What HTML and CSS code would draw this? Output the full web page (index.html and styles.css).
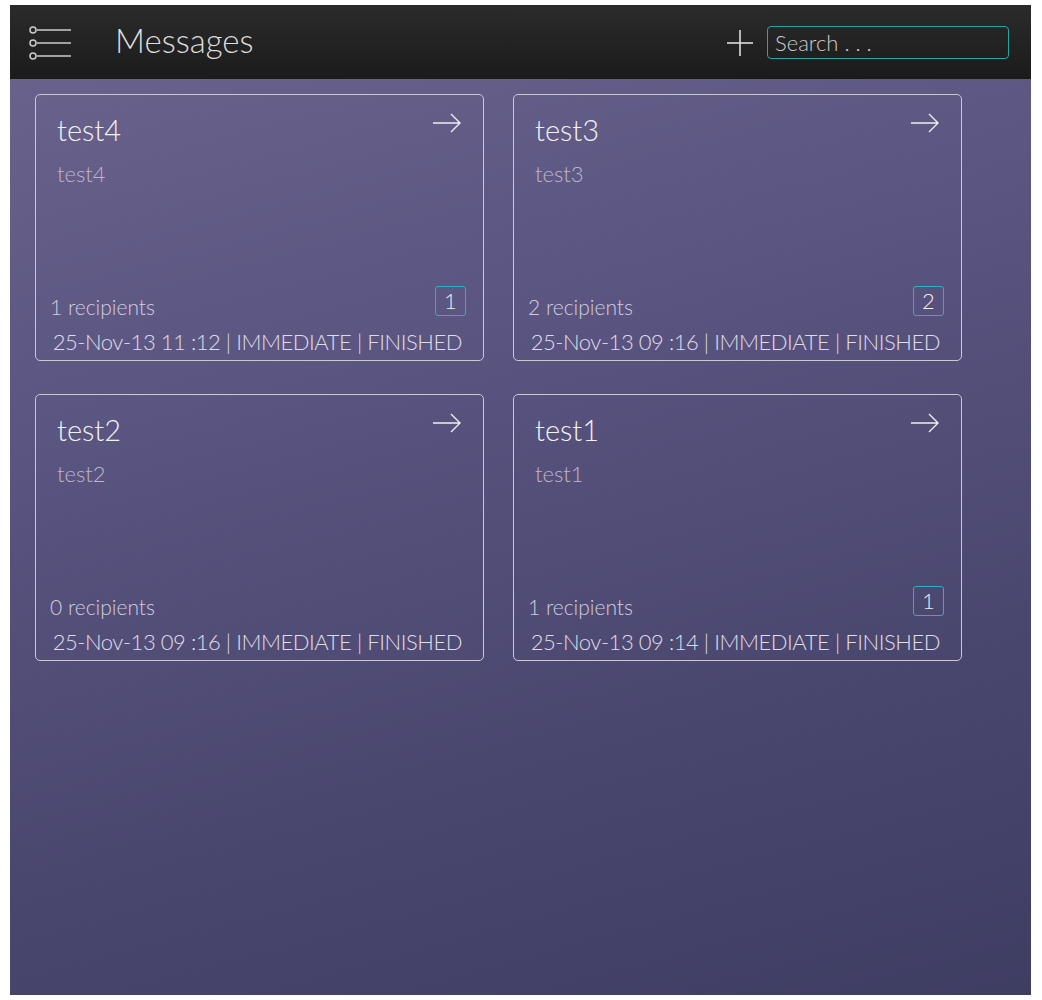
FILE: index.html
```html
<!DOCTYPE html>
<html lang="en">
<head>
    <meta charset="UTF-8">
    <title>Messages</title>
    <link rel="stylesheet" href="styles.css">
</head>
<body>
<div class="app">
    <div class="topbar">
        <svg class="menu_icon" width="44" height="36" viewBox="0 0 44 36">
            <circle cx="5" cy="5" r="3" fill="none" stroke="#ccc" stroke-width="1.5"/>
            <circle cx="5" cy="18" r="3" fill="none" stroke="#ccc" stroke-width="1.5"/>
            <circle cx="5" cy="31" r="3" fill="none" stroke="#ccc" stroke-width="1.5"/>
            <line x1="9" y1="5" x2="43" y2="5" stroke="#ccc" stroke-width="1.5"/>
            <line x1="9" y1="18" x2="43" y2="18" stroke="#ccc" stroke-width="1.5"/>
            <line x1="9" y1="31" x2="43" y2="31" stroke="#ccc" stroke-width="1.5"/>
        </svg>
        <div class="title">Messages</div>
        <svg class="plus" width="26" height="26" viewBox="0 0 26 26">
            <line x1="13" y1="0" x2="13" y2="26" stroke="#ddd" stroke-width="1.6"/>
            <line x1="0" y1="13" x2="26" y2="13" stroke="#ddd" stroke-width="1.6"/>
        </svg>
        <input class="search" type="text" placeholder="Search . . .">
    </div>

    <div class="list">
        <div class="card">
            <div class="card_head">
                <div class="card_title">test4</div>
                <svg class="go" width="30" height="20" viewBox="0 0 30 20">
                    <path d="M1 10 H28 M19 1 L28 10 L19 19" fill="none" stroke="#eee" stroke-width="1.4"/>
                </svg>
            </div>
            <div class="card_sub">test4</div>
            <div class="card_row">
                <span class="recip">1 recipients</span>
                <span class="badge">1</span>
            </div>
            <div class="card_foot">25-Nov-13 11 :12 | IMMEDIATE | FINISHED</div>
        </div>

        <div class="card">
            <div class="card_head">
                <div class="card_title">test3</div>
                <svg class="go" width="30" height="20" viewBox="0 0 30 20">
                    <path d="M1 10 H28 M19 1 L28 10 L19 19" fill="none" stroke="#eee" stroke-width="1.4"/>
                </svg>
            </div>
            <div class="card_sub">test3</div>
            <div class="card_row">
                <span class="recip">2 recipients</span>
                <span class="badge">2</span>
            </div>
            <div class="card_foot">25-Nov-13 09 :16 | IMMEDIATE | FINISHED</div>
        </div>

        <div class="card">
            <div class="card_head">
                <div class="card_title">test2</div>
                <svg class="go" width="30" height="20" viewBox="0 0 30 20">
                    <path d="M1 10 H28 M19 1 L28 10 L19 19" fill="none" stroke="#eee" stroke-width="1.4"/>
                </svg>
            </div>
            <div class="card_sub">test2</div>
            <div class="card_row">
                <span class="recip">0 recipients</span>
            </div>
            <div class="card_foot">25-Nov-13 09 :16 | IMMEDIATE | FINISHED</div>
        </div>

        <div class="card">
            <div class="card_head">
                <div class="card_title">test1</div>
                <svg class="go" width="30" height="20" viewBox="0 0 30 20">
                    <path d="M1 10 H28 M19 1 L28 10 L19 19" fill="none" stroke="#eee" stroke-width="1.4"/>
                </svg>
            </div>
            <div class="card_sub">test1</div>
            <div class="card_row">
                <span class="recip">1 recipients</span>
                <span class="badge">1</span>
            </div>
            <div class="card_foot">25-Nov-13 09 :14 | IMMEDIATE | FINISHED</div>
        </div>
    </div>
</div>
</body>
</html>
```

FILE: styles.css
```css
html, body {
    margin: 0;
    padding: 0;
    background: #fff;
}

body {
    padding: 5px 11px 5px 10px;
    font-family: "Lato", "Liberation Sans", sans-serif;
    font-weight: 300;
}

.app {
    height: 990px;
    display: flex;
    flex-direction: column;
    background: linear-gradient(165deg, #6b648e 0%, #5a5581 35%, #4a476f 70%, #3e3d62 100%);
}

.topbar {
    height: 74px;
    flex: none;
    display: flex;
    align-items: center;
    padding: 0 22px 0 18px;
    background: linear-gradient(#2b2b2b, #1b1b1b);
}

.menu_icon {
    margin-top: 2px;
}

.title {
    margin-left: 43px;
    margin-bottom: 5px;
    color: #ddd;
    font-size: 33px;
    font-weight: 300;
    flex: 1;
}

.plus {
    margin-right: 14px;
    margin-top: 2px;
}

.search {
    width: 226px;
    height: 31px;
    box-sizing: content-box;
    padding: 0 7px;
    border: 1.5px solid #2aa3a3;
    border-radius: 4px;
    background: transparent;
    color: #ddd;
    font-family: "Lato", "Liberation Sans", sans-serif;
    font-weight: 300;
    font-size: 22px;
    outline: none;
}

.search::placeholder {
    color: #ccc;
}

.list {
    display: grid;
    grid-template-columns: 449px 449px;
    column-gap: 29px;
    row-gap: 33px;
    padding: 15px 0 0 25px;
    align-content: start;
}

.card {
    height: 265px;
    border: 1px solid #cbc7da;
    border-radius: 5px;
    display: flex;
    flex-direction: column;
    padding: 0 21px 0 12px;
    color: #eee;
}

.card_head {
    display: flex;
    justify-content: space-between;
    align-items: flex-start;
    padding-left: 9px;
    padding-top: 15px;
}

.card_title {
    font-size: 29px;
    color: #f2f2f2;
    line-height: 40px;
}

.go {
    margin-top: 3px;
}

.card_sub {
    padding-left: 9px;
    font-size: 22px;
    color: #bbb6cc;
    margin-top: 10px;
}

.card_row {
    margin-top: auto;
    display: flex;
    justify-content: space-between;
    align-items: flex-end;
}

.recip {
    font-size: 21px;
    color: #d0cde0;
    padding-left: 2px;
    margin-bottom: -2px;
}

.badge {
    width: 29px;
    height: 28px;
    border: 1px solid #2ab0c0;
    border-radius: 3px;
    text-align: center;
    line-height: 28px;
    font-size: 22px;
    color: #eee;
    margin-right: -4px;
    margin-bottom: 1px;
}

.card_foot {
    text-align: right;
    white-space: nowrap;
    font-size: 22px;
    letter-spacing: -0.45px;
    color: #e0dde8;
    margin: 11px 0 4px;
    line-height: 28px;
}
```
